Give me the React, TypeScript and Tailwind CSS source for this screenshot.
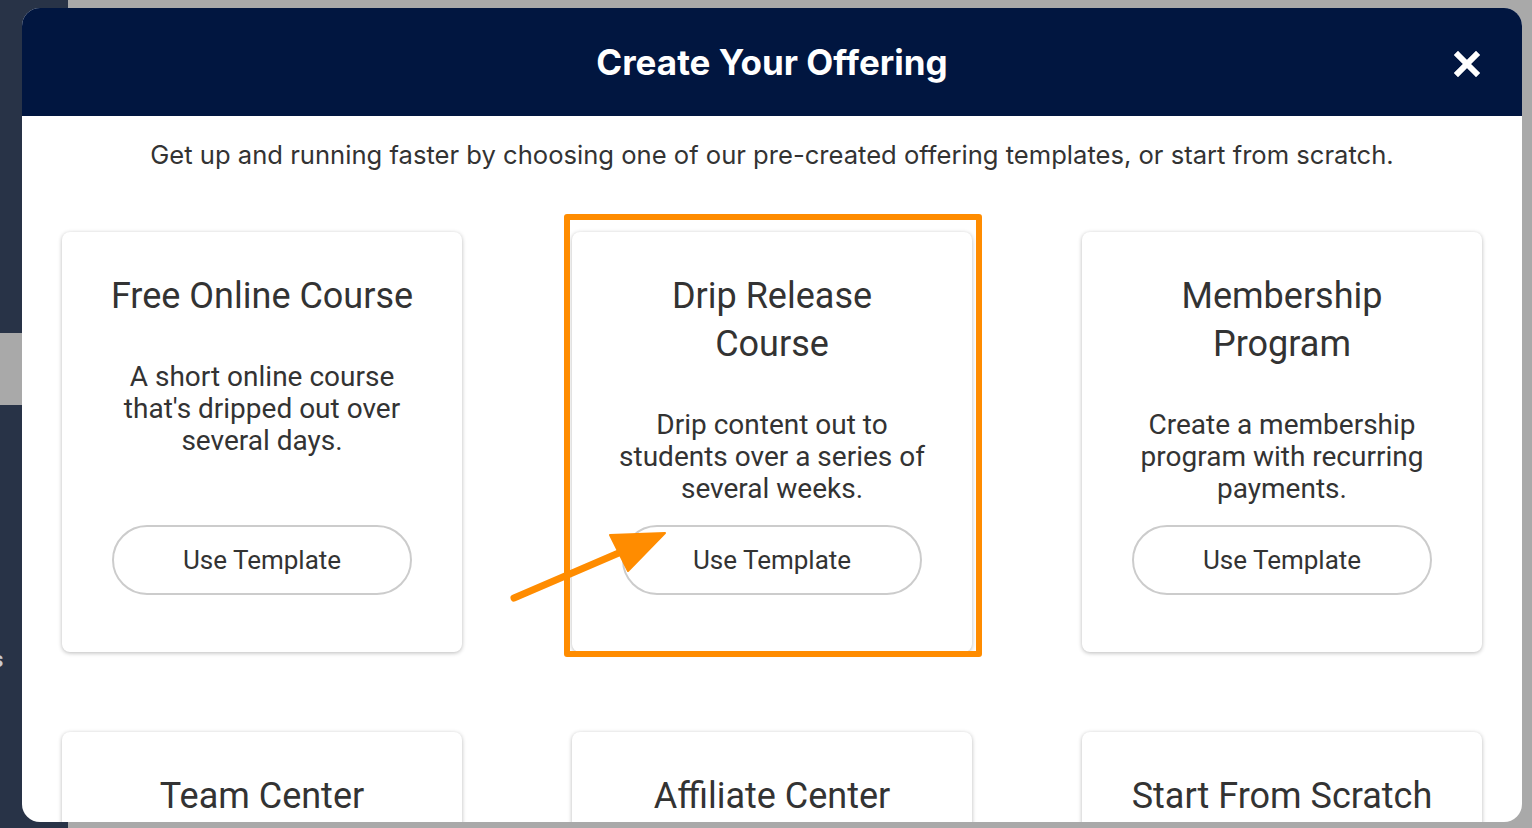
import React from "react";

const cards = [
  { title: "Free Online Course", desc: "A short online course that's dripped out over several days." },
  { title: "Drip Release Course", desc: "Drip content out to students over a series of several weeks." },
  { title: "Membership Program", desc: "Create a membership program with recurring payments." },
  { title: "Team Center", desc: "" },
  { title: "Affiliate Center", desc: "" },
  { title: "Start From Scratch", desc: "" },
];

function Card({ title, desc }: { title: string; desc: string }) {
  return (
    <div className="flex h-[420px] flex-col items-center rounded-[8px] bg-white px-[44px] pt-[40px] pb-[57px] text-center text-[#333] shadow-[0_1px_4px_rgba(0,0,0,0.28)]">
      <div className="text-[36px] leading-[48px]">{title}</div>
      {desc && <div className="mt-[41px] text-[28px] leading-[32px]">{desc}</div>}
      <button className="mt-auto flex h-[70px] w-[300px] shrink-0 items-center justify-center rounded-full border-2 border-[#cccccc] bg-white text-[26px] text-[#333]">
        Use Template
      </button>
    </div>
  );
}

export default function App() {
  return (
    <div
      className="relative h-[828px] w-[1532px] overflow-hidden bg-[#a9a9a9]"
      style={{ fontFamily: "Roboto, 'Liberation Sans', sans-serif" }}
    >
      {/* background page */}
      <div className="flex h-full">
        <div className="flex h-full w-[68px] flex-col bg-[#283347]">
          <div className="h-[333px]" />
          <div className="h-[72px] bg-[#a9a9a9]" />
          <div className="mt-[238px] -ml-[8px] text-[22px] font-bold text-[#c8ccd4]">s</div>
        </div>
        <div className="flex-1" />
      </div>

      {/* modal */}
      <div className="absolute left-[22px] top-[8px] flex h-[814px] w-[1500px] flex-col overflow-hidden rounded-[18px] bg-white">
        <div className="relative flex h-[108px] shrink-0 items-center justify-center bg-[#011640]">
          <div
            className="text-[35px] font-bold text-white"
            style={{ fontFamily: "Inter, 'Liberation Sans', sans-serif" }}
          >
            Create Your Offering
          </div>
          <svg className="absolute left-[1432px] top-[43px]" width="26" height="26" viewBox="0 0 26 26">
            <path d="M4 4 L22 22 M22 4 L4 22" stroke="white" strokeWidth="6" strokeLinecap="square" />
          </svg>
        </div>
        <div
          className="pt-[23px] text-center text-[25.6px] leading-[32px] text-[#333]"
          style={{ fontFamily: "Inter, 'Liberation Sans', sans-serif" }}
        >
          Get up and running faster by choosing one of our pre-created offering templates, or start from scratch.
        </div>
        <div className="mt-[61px] grid grid-cols-3 gap-x-[110px] gap-y-[80px] px-[40px]">
          {cards.map((c) => (
            <Card key={c.title} title={c.title} desc={c.desc} />
          ))}
        </div>
      </div>

      {/* annotation */}
      <div className="absolute left-[564px] top-[214px] h-[443px] w-[418px] rounded-[3px] border-[6px] border-[#ff8c00]" />
      <svg className="pointer-events-none absolute left-0 top-0" width="1532" height="828" viewBox="0 0 1532 828">
        <line x1="514" y1="598" x2="628" y2="549" stroke="#ff8c00" strokeWidth="7" strokeLinecap="round" />
        <polygon points="665,533 610,535 628,571" fill="#ff8c00" stroke="#ff8c00" strokeWidth="2" strokeLinejoin="round" />
      </svg>
    </div>
  );
}
